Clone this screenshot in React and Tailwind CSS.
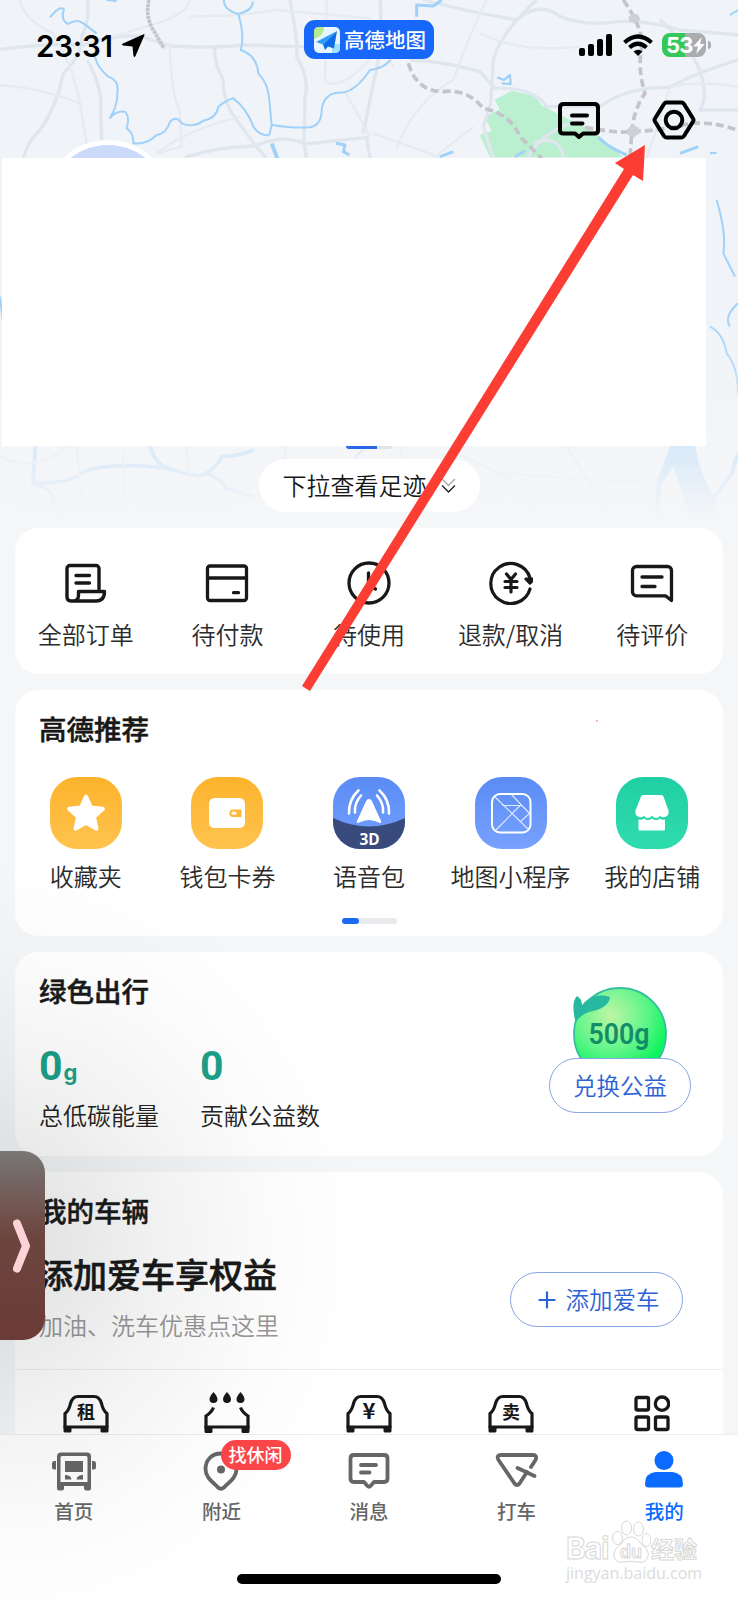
import { Plus } from 'lucide-react'

const ORDERS = [
  { label: '全部订单', icon: OrderIcon },
  { label: '待付款', icon: PayIcon },
  { label: '待使用', icon: ClockIcon },
  { label: '退款/取消', icon: RefundIcon },
  { label: '待评价', icon: ReviewIcon },
]

const RECOMMENDED = [
  { label: '收藏夹', color: 'bg-linear-to-b from-[#fcb32a] to-[#ffc34d]', icon: StarArt },
  { label: '钱包卡券', color: 'bg-linear-to-b from-[#fcb32a] to-[#ffc34d]', icon: WalletArt },
  { label: '语音包', color: 'bg-linear-to-b from-[#5a8cf5] to-[#74a0ff]', icon: VoiceArt },
  { label: '地图小程序', color: 'bg-linear-to-b from-[#5a8cf5] to-[#78a1ff]', icon: MiniAppArt },
  { label: '我的店铺', color: 'bg-linear-to-b from-[#1fcfa3] to-[#2fdcae]', icon: ShopArt },
]

const TABS = [
  { label: '首页', icon: BusIcon },
  { label: '附近', icon: PinIcon, badge: '找休闲' },
  { label: '消息', icon: MessageTabIcon },
  { label: '打车', icon: TaxiIcon },
  { label: '我的', icon: UserIcon, active: true },
]

function Stroke({ children, className = 'h-11 w-11', width = 3.2 }) {
  return (
    <svg
      viewBox="0 0 44 44"
      className={className}
      fill="none"
      stroke="currentColor"
      strokeWidth={width}
      strokeLinecap="round"
      strokeLinejoin="round"
    >
      {children}
    </svg>
  )
}

function OrderIcon() {
  return (
    <Stroke width={3.4}>
      <path d="M35 28V7.500a3 3 0 0 0-3-3H6a3 3 0 0 0-3 3V36q0 4 4 4h25q8.500 0 8.500-9.500H14.500V34q0 6-5 6" />
      <path d="M12 14.500h13.500M12 22h13.500" />
    </Stroke>
  )
}

function PayIcon() {
  return (
    <Stroke width={3.3}>
      <rect x="2.500" y="5" width="39" height="34.500" rx="2.500" />
      <path d="M2.500 17h39M28.500 31.700h5" />
    </Stroke>
  )
}

function ClockIcon() {
  return (
    <Stroke width={3.3}>
      <circle cx="22" cy="22" r="20" />
      <path d="M21.500 12v12l7 4" />
    </Stroke>
  )
}

function RefundIcon() {
  return (
    <Stroke width={3.2}>
      <path d="M41 17A20 20 0 1 0 41 28" />
      <path d="M37 18h8l-4.200 4z" fill="currentColor" />
      <path d="M17.500 13l4.500 5.500 4.500-5.500M16 20.500h12M16 26.500h12M22 19v12" />
    </Stroke>
  )
}

function ReviewIcon() {
  return (
    <Stroke width={3.3}>
      <path d="M6.500 5.500h31a4 4 0 0 1 4 4V39.500l-6-4.700H6.500a4 4 0 0 1-4-4V9.500a4 4 0 0 1 4-4z" />
      <path d="M12 16h20M12 25.500h13" />
    </Stroke>
  )
}

function StarArt() {
  return (
    <svg viewBox="0 0 72 72" className="h-full w-full">
      <path
        d="M36 19.500l4.900 11 12 1.300-9 8.100 2.600 11.900L36 45.700l-10.500 6.100 2.600-11.900-9-8.100 12-1.300z"
        fill="#fff"
        stroke="#fff"
        strokeWidth="4"
        strokeLinejoin="round"
      />
    </svg>
  )
}

function WalletArt() {
  return (
    <svg viewBox="0 0 72 72" className="h-full w-full">
      <rect x="18" y="21" width="36" height="30" rx="5.500" fill="#fff" />
      <path d="M50.500 32.500H42a3.700 3.700 0 0 0 0 7.400h8.500z" fill="#fdba39" />
      <ellipse cx="43" cy="36.200" rx="2.500" ry="1.600" fill="#fff" />
    </svg>
  )
}

function VoiceArt() {
  return (
    <svg viewBox="0 0 72 72" className="h-full w-full">
      <path d="M0 41q36 17 72 0v31H0z" fill="#394b7c" />
      <path d="M36 22q2 0 3 2.200l9 19.800q1 3-2 1.500-10-5-20 0-3 1.500-2-1.500l9-19.800q1-2.200 3-2.200z" fill="#fff" />
      <path
        d="M25.500 13.500q-10 9-9.500 23M28 18.500q-7 8-6 17M46.500 13.500q10 9 9.500 23M44 18.500q7 8 6 17"
        fill="none"
        stroke="#fff"
        strokeWidth="2.600"
        strokeLinecap="round"
      />
      <text x="36.500" y="68" textAnchor="middle" fontFamily="Noto Sans" fontWeight="700" fontSize="15.500" fill="#fff">3D</text>
    </svg>
  )
}

function MiniAppArt() {
  return (
    <svg viewBox="0 0 72 72" className="h-full w-full" fill="none" stroke="#fff">
      <rect x="17" y="17" width="38.500" height="38.500" rx="8" strokeWidth="2" />
      <path d="M20 20l33 32M21 53l24-24.500M36 17l19 20M27 28.500h20M45 45l10-9" strokeWidth="1.100" opacity=".8" />
    </svg>
  )
}

function ShopArt() {
  return (
    <svg viewBox="0 0 72 72" className="h-full w-full" fill="#fff">
      <path d="M25 19.500q.6-1.500 2-1.500h18.500q1.400 0 2 1.500l5 14q1 4-2.500 6-3.500 2-6-.8-3.500 4.600-8 0-4.500 4.600-8 0-2.500 2.800-6 .8-3.500-2-2.500-6z" />
      <path d="M22.500 42.500q3.500.8 5.500-1 4 3 8 0 4 3 8 0 2 1.800 5 1V52q0 1.500-1.500 1.500H24q-1.500 0-1.500-1.500z" />
    </svg>
  )
}

// front view of a car, shared by the service shortcuts
function CarIcon({ char }) {
  return (
    <svg viewBox="0 0 46 42" className="h-[42px] w-[46px]">
      <path
        d="M2 35V21.500q4-3 5.500-10Q9.500 4.500 15 4.500h16q5.500 0 7.500 7 1.500 7 5.500 10V35z"
        fill="none"
        stroke="#181818"
        strokeWidth="3.200"
        strokeLinejoin="round"
      />
      <path d="M.5 34h8v5q0 1.500-1.500 1.500H2q-1.500 0-1.500-1.500zM37.500 34h8v5q0 1.500-1.500 1.500h-5q-1.500 0-1.500-1.500z" fill="#181818" />
      <text x="23" y="26.500" textAnchor="middle" fontFamily="Noto Sans CJK SC" fontWeight="700" fontSize={char === '¥' ? 22 : 18} fill="#181818">
        {char}
      </text>
    </svg>
  )
}

function CarWashIcon() {
  return (
    <svg viewBox="0 0 46 42" className="h-[42px] w-[46px]" fill="#181818">
      <path d="M9.500 15.500Q7.500 20.500 2 24v11h42V24q-5.500-3.500-7.500-8.500" fill="none" stroke="#181818" strokeWidth="3.200" />
      <path d="M.5 34h8v5.500q0 1.500-1.500 1.500H2q-1.500 0-1.500-1.500zM37.500 34h8v5.500q0 1.500-1.500 1.500h-5q-1.500 0-1.500-1.500z" />
      <path d="M9.500 0q4 4.500 4 7a4 4 0 0 1-8 0q0-2.500 4-7zM23 0q4 4.500 4 7a4 4 0 0 1-8 0q0-2.500 4-7zM36.500 0q4 4.500 4 7a4 4 0 0 1-8 0q0-2.500 4-7z" />
    </svg>
  )
}

function GridIcon() {
  return (
    <svg viewBox="0 0 36 42" className="h-[42px] w-9" fill="none" stroke="#181818" strokeWidth="3.300">
      <rect x="2" y="5.500" width="12.500" height="12.500" rx="1.500" />
      <circle cx="28" cy="11.700" r="6.700" />
      <rect x="2" y="25" width="12.500" height="12.500" rx="1.500" />
      <rect x="21.500" y="25" width="12.500" height="12.500" rx="1.500" />
    </svg>
  )
}

function BusIcon() {
  return (
    <svg viewBox="0 0 44 40" className="h-10 w-11" fill="currentColor">
      <path d="M9 1.500h26a4 4 0 0 1 4 4V37.500q0 2-2 2h-3q-2 0-2-2V35H12v2.500q0 2-2 2H7q-2 0-2-2V5.500a4 4 0 0 1 4-4zM10 5q-1.500 0-1.500 1.500V31h27V6.500Q35.500 5 34 5z" fillRule="evenodd" />
      <rect x="13" y="10" width="18" height="11" />
      <path d="M13 24q6 0 6.500 4.500H13zM31 24q-6 0-6.500 4.500H31z" />
      <path d="M4 10v8.500H2q-2 0-2-2v-4q0-2.500 2-2.500zM40 10v8.500h2q2 0 2-2v-4q0-2.500-2-2.500z" />
    </svg>
  )
}

function PinIcon() {
  return (
    <svg viewBox="0 0 44 40" className="h-10 w-11" fill="none" stroke="currentColor" strokeWidth="3.800" strokeLinejoin="round">
      <path d="M22 2.500C12 2.500 6.500 10 6.500 18c0 9 8 13.500 12.500 18.500q3 2.500 6 0C29.500 31.500 37.500 27 37.500 18c0-8-5.500-15.500-15.500-15.500z" />
      <circle cx="22" cy="18.500" r="4" fill="currentColor" stroke="none" />
    </svg>
  )
}

function MessageTabIcon() {
  return (
    <svg viewBox="0 0 44 40" className="h-10 w-11" fill="none" stroke="currentColor" strokeWidth="3.800" strokeLinecap="round" strokeLinejoin="round">
      <path d="M7 4h30q3.500 0 3.500 3.500v20q0 3.500-3.500 3.500H27l-3.500 4q-1.500 1.500-3 0L17 31H7q-3.500 0-3.500-3.500v-20Q3.500 4 7 4z" />
      <path d="M14 14h15M14 21.500h8.500" />
    </svg>
  )
}

function TaxiIcon() {
  return (
    <svg viewBox="0 0 44 40" className="h-10 w-11" fill="none" stroke="currentColor" strokeWidth="3.800" strokeLinecap="round" strokeLinejoin="round">
      <path d="M36 16l4.500-7Q42.500 4 38 4H6Q1 4 3.500 9l16 23.500q2.500 3 5 0L32 21" />
      <path d="M22.500 17l17 8" />
    </svg>
  )
}

function UserIcon() {
  return (
    <svg viewBox="0 0 44 40" className="h-10 w-11" fill="currentColor">
      <circle cx="22" cy="9.500" r="9.500" />
      <path d="M3 33q0-11 10.500-12h17Q41 22 41 33q0 3.500-3.500 3.500h-31Q3 36.500 3 33z" />
    </svg>
  )
}

function MapBackground() {
  return (
    <svg viewBox="0 0 2214 1590" className="absolute top-0 left-0 h-[530px] w-[738px]" fill="none" strokeLinejoin="round">
      <defs>
        <linearGradient id="fade" x1="0" y1="0" x2="0" y2="1">
          <stop offset="0" stopColor="#f5f6f8" stopOpacity="0" />
          <stop offset="0.600" stopColor="#f5f6f8" stopOpacity="0.620" />
          <stop offset="0.950" stopColor="#f5f6f8" />
        </linearGradient>
      </defs>
      <rect width="2214" height="1590" fill="#f0f4f8" />
      <path
        d="M1484 300L1534 272L1604 287L1624 315L1680 345L1784 395L1870 472H1470L1439 405L1474 392L1455 350L1499 328Z"
        fill="#baf0d0"
      />
      <g stroke="#dfe6ee" strokeWidth="10">
        <path d="M262 0Q270 60 245 110Q250 160 190 220Q170 320 120 390Q80 430 70 475" />
        <path d="M0 148Q120 130 250 135Q330 105 420 108L510 138Q640 145 740 135L890 140L1110 138" />
        <path d="M262 180Q310 270 302 330L305 420" />
        <path d="M645 135Q640 190 670 240Q670 310 710 360L765 435L800 475" />
        <path d="M870 0Q895 130 890 170Q930 240 915 290L912 430L920 475" />
        <path d="M555 472Q650 440 765 438Q850 400 915 432L1100 412L1110 475" />
        <path d="M1270 0Q1380 30 1550 60Q1620 0 1680 50Q1760 80 1850 65Q1940 60 2040 90L2214 105" />
        <path d="M1610 0Q1500 100 1480 180L1472 310L1450 380L1480 475" />
        <path d="M1230 180Q1340 185 1440 215L1484 265Q1600 260 1640 320L1800 320Q1880 260 2010 262Q2080 220 2214 180" />
        <path d="M1980 60Q2050 120 2090 190Q2130 280 2100 330L2214 330" />
        <path d="M1140 0Q1150 140 1120 250L1090 400" />
        <path d="M1580 475Q1640 380 1740 365M1600 430Q1680 400 1690 475" />
      </g>
      <g stroke="#e6ebf2" strokeWidth="7">
        <path d="M60 0Q70 60 160 100Q220 200 240 310L260 430" />
        <path d="M0 255Q130 265 240 310" />
        <path d="M510 138Q510 260 540 340L545 440L470 460Q560 390 720 350" />
        <path d="M570 0Q560 50 420 85L340 110M570 50L720 45L830 30L1110 55L1180 200" />
        <path d="M980 0L975 240Q1010 280 1110 180M1035 275L1110 410" />
        <path d="M1460 0Q1410 100 1360 240Q1250 300 1190 440M1440 100Q1560 160 1740 140M1300 475L1420 380" />
        <path d="M1120 400L1330 475M2214 260Q2080 240 2010 262L1940 475" />
      </g>
      <g stroke="#c4c4ca" strokeWidth="11" strokeDasharray="24 12">
        <path d="M447 0Q435 50 460 90L492 145" strokeDasharray="10 2" />
        <path d="M1225 190Q1250 275 1330 275Q1400 265 1450 325Q1530 340 1560 410L1625 475" />
        <path d="M1870 0Q1920 70 1928 130Q1910 200 1935 280Q1900 330 1895 400L1890 475" />
        <path d="M1755 382Q1850 400 1895 395Q2000 390 2070 370Q2150 365 2214 392" />
      </g>
      <g fill="#cfcfd6">
        <path d="M1885 50l14-10 16 4 6 14-14 12-20-6zM1882 388l14-14 18 8 6 16-18 14-20-8z" />
      </g>
      <g stroke="#a0d1f9" strokeWidth="6">
        <path d="M150 52Q180 15 192 28Q180 60 205 72Q230 55 250 70L290 100" />
        <path d="M320 0L350 3" />
        <path d="M285 170Q290 200 325 230Q358 240 352 280Q352 320 330 354Q350 330 375 335Q390 350 380 385Q402 400 400 430Q440 435 470 405Q500 400 510 365Q530 345 545 370Q580 385 610 362Q650 355 655 320Q680 300 700 295Q740 325 760 380Q780 410 808 405" />
        <path d="M672 0Q670 30 715 42Q735 110 722 150Q770 165 775 220Q805 250 808 300L815 375L808 405M715 42Q760 30 758 5" />
        <path d="M815 375Q880 385 930 382Q965 375 965 330Q970 285 1010 278Q1060 285 1110 210Q1150 205 1172 180" />
        <path d="M815 430L832 475" strokeWidth="12" />
        <path d="M1008 430L1035 435L1030 455L1048 465M1250 50V15L1300 18L1325 0" strokeWidth="9" />
        <path d="M1492 232L1512 240L1530 225L1532 252L1505 250" strokeWidth="7" />
        <path d="M1795 412Q1820 440 1880 465M2040 460L2095 440M1320 470L1360 455M1545 470L1575 452" strokeWidth="9" />
        <path d="M2190 45L2214 30M2130 460L2150 458" />
        <path d="M2150 600Q2180 700 2170 760L2205 830M2130 980Q2170 1000 2180 1060Q2214 1100 2214 1180M2214 910Q2170 950 2190 980" />
        <path d="M0 890L8 960" />
        <path d="M106 1340L99 1450Q162 1470 160 1500L184 1570M99 1450Q220 1450 250 1415Q340 1385 494 1405L593 1428Q640 1420 665 1370Q710 1370 762 1350M450 1340Q470 1400 510 1405M620 1420Q670 1440 678 1465L762 1492" strokeWidth="11" />
        <path d="M1090 1350Q1060 1370 1065 1385" />
      </g>
      <g stroke="#dfe6ee" strokeWidth="7">
        <path d="M0 1370Q100 1420 200 1340M230 1340L250 1570M370 1350V1560M560 1340L580 1590M0 1540L400 1510L760 1540M860 1340L800 1560M1480 1420Q1650 1480 1560 1590M1700 1340L1860 1590M1350 1350L1500 1420L1960 1450M1200 1340L1210 1380" />
      </g>
      <path d="M2010 1338H2085Q2100 1430 2150 1500V1590H2080Q2050 1480 2020 1400L1985 1450L1970 1590H1958L1972 1440Z" fill="#a0d1f9" />
      <path d="M2214 1360L2195 1420L2145 1490" stroke="#a0d1f9" strokeWidth="12" />
      <rect y="900" width="2214" height="690" fill="url(#fade)" />
      <circle cx="324" cy="615" r="195" fill="#fff" />
      <circle cx="324" cy="615" r="180" fill="#cbd9fb" />
    </svg>
  )
}

function StatusBar() {
  return (
    <div className="flex h-[78px] items-start pr-[27px] pl-9">
      <div className="flex w-[268px] shrink-0 items-center gap-[9px] pt-7">
        <span className="font-[Inter] text-[29.500px] leading-9 font-semibold tracking-[-0.2px] text-black">23:31</span>
        <svg viewBox="0 0 24 24" className="h-6 w-6">
          <path d="M22.500 1L13.500 22q-1 2-2 0l-1-9.500L1 11.500q-2-1 0-2L21 .5q2-.6 1.500.5z" />
        </svg>
      </div>
      <div className="mt-5 flex h-[39px] w-[130px] shrink-0 items-center gap-[4px] rounded-[11px] bg-[#1867fb] pl-[10px]">
        <svg viewBox="0 0 26 26" className="h-[26px] w-[26px] shrink-0">
          <rect width="26" height="26" rx="5" fill="#e9f6ff" />
          <path d="M0 12V5q0-5 5-5h5q0 9-10 12z" fill="#b5ea8f" />
          <path d="M18 26v-9h8v4q0 5-5 5z" fill="#9ee3fb" />
          <path d="M23 4L2 15l7 2.500z" fill="#2f9dfb" />
          <path d="M23 4L9 17.500 11 23l3-3.500 6 2z" fill="#0d6ce8" />
        </svg>
        <span className="text-[20.500px] leading-none font-medium whitespace-nowrap text-white">高德地图</span>
      </div>
      <div className="flex flex-1 items-center justify-end pt-[33px]">
        <svg viewBox="0 0 34 22" className="mr-[10px] h-[22px] w-[34px]">
          <rect x="0" y="14" width="6" height="8" rx="2" />
          <rect x="9" y="10" width="6" height="12" rx="2" />
          <rect x="18" y="5" width="6" height="17" rx="2" />
          <rect x="27" y="0" width="6" height="22" rx="2" />
        </svg>
        <svg viewBox="0 0 30 22" className="mr-[9px] h-[22px] w-[30px]" fill="none" stroke="#000" strokeWidth="4.200">
          <path d="M1.500 8.500q13.500-12 27 0" />
          <path d="M6.500 13.500q8.500-7.500 17 0" />
          <path d="M10.500 17.500q4.500-3.500 9 0L15 22z" fill="#000" stroke="none" />
        </svg>
        <div className="flex h-6 w-11 items-center overflow-hidden rounded-lg bg-linear-to-r from-[#34c759] from-52% to-[#a9acb0] to-52% pl-1">
          <span className="font-[Inter] text-[22px] leading-6 font-bold tracking-[-0.8px] text-white">53</span>
          <svg viewBox="0 0 12 18" className="h-[17px] w-3" fill="#fff">
            <path d="M9 0L0 10h5L3 18l9-10.500H7z" />
          </svg>
        </div>
        <div className="ml-0.5 h-2 w-[3px] rounded-r-full bg-[#a9acb0]" />
      </div>
    </div>
  )
}

function Toolbar() {
  return (
    <div className="flex h-20 items-start justify-end gap-[51px] pt-[22px] pr-[42px]">
      <svg viewBox="0 0 44 40" className="h-10 w-11" fill="none" stroke="#000" strokeWidth="4" strokeLinecap="round" strokeLinejoin="round">
        <path d="M6.500 4h31q3.500 0 3.500 3.500v23q0 3-3.500 3H26L22 37l-4-3.500H6.500Q3 33.500 3 30.500v-23Q3 4 6.500 4z" />
        <path d="M15 15.500h15M15 23.500h10.500" />
      </svg>
      <svg viewBox="0 0 44 40" className="h-10 w-11" fill="none" stroke="#000" strokeWidth="4" strokeLinejoin="round">
        <path d="M14.500 2.500h15q1.500 0 2.500 1.500l9 14.500q1 1.500 0 3l-9 14.500q-1 1.500-2.500 1.500h-15q-1.500 0-2.500-1.500L3 21.500q-1-1.500 0-3L12 4q1-1.500 2.500-1.500z" />
        <circle cx="22" cy="20" r="8.300" />
      </svg>
    </div>
  )
}

function CardTitle({ children }) {
  return (
    <h2 className="pl-6 text-[27.500px] leading-10 font-medium whitespace-nowrap text-[#181818] [-webkit-text-stroke:0.500px_#181818]">
      {children}
    </h2>
  )
}

function Card({ className = '', children }) {
  return <section className={`ml-[15px] w-[708px] shrink-0 rounded-[24px] bg-white ${className}`}>{children}</section>
}

function SideHandle() {
  return (
    <div className="absolute top-[1151px] left-0 flex h-[189px] w-[45px] items-center rounded-r-[22px] bg-linear-to-b from-[#777776] via-[#6d453f] via-45% to-[#6b3b37] pl-[13px]">
      <svg viewBox="0 0 18 54" className="h-[54px] w-[18px]" fill="none" stroke="#fdd3d5" strokeWidth="8" strokeLinecap="round" strokeLinejoin="round">
        <path d="M4 4.500l9 22.500-9 22.500" />
      </svg>
    </div>
  )
}

function Watermark() {
  return (
    <div className="absolute top-[1518px] left-[566px] flex w-[136px] flex-col opacity-90">
      <div className="flex h-[46px] items-end">
        <span className="w-[45px] font-[Inter] text-[30px] leading-8 font-bold tracking-[-1px] text-white [-webkit-text-stroke:1px_#d4d4d4]">Bai</span>
        <svg viewBox="0 0 40 44" className="h-11 w-10 shrink-0" fill="#fff" stroke="#d4d4d4" strokeWidth="1">
          <ellipse cx="6.500" cy="18" rx="5" ry="6.500" />
          <ellipse cx="15.500" cy="8" rx="5" ry="7" />
          <ellipse cx="27.500" cy="9" rx="5" ry="7" />
          <ellipse cx="35.500" cy="20" rx="4.500" ry="6.500" />
          <path d="M20 17q6 0 10 7 9 6 7 13-3 7-10 5-7-1.500-14 0-8 1.500-10-5Q2 29 10 24q4-7 10-7z" />
          <text x="20" y="38" textAnchor="middle" fontFamily="Inter" fontSize="18" fontWeight="600">du</text>
        </svg>
        <span className="text-[23px] leading-8 font-bold whitespace-nowrap text-white [-webkit-text-stroke:1px_#d4d4d4]">经验</span>
      </div>
      <span className="-mt-px font-[Open_Sans] text-[16px] leading-5 whitespace-nowrap text-[#d8d8d8]">jingyan.baidu.com</span>
    </div>
  )
}

export default function App() {
  return (
    <div className="relative flex h-[1600px] w-[738px] flex-col overflow-hidden bg-[#f4f6f8] font-['Noto_Sans_CJK_SC',sans-serif] text-[#333]">
      <MapBackground />

      <header className="relative h-[528px] shrink-0">
        <StatusBar />
        <Toolbar />
        <div className="ml-0.5 h-72 w-[704px] bg-white" />
        <div className="mx-auto flex h-[3px] w-[46px] overflow-hidden rounded-b-sm bg-[#e0e3e8]">
          <div className="w-[31px] bg-[#2a6aea]" />
        </div>
        <div className="mx-auto mt-[10px] flex h-[53px] w-[221px] items-center gap-[14px] rounded-full bg-white pl-6">
          <span className="-mt-0.5 text-[24px] leading-none font-[350] whitespace-nowrap text-[#181818]">下拉查看足迹</span>
          <svg viewBox="0 0 14 14" className="h-[15px] w-[15px]" fill="none" strokeWidth="1.300">
            <path d="M1 1l6 6 6-6" stroke="#aaa" />
            <path d="M1 7l6 6 6-6" stroke="#222" />
          </svg>
        </div>
      </header>

      <main className="relative flex h-[906px] shrink-0 flex-col gap-4 overflow-hidden">
        <Card className="grid h-[146px] grid-cols-5 pt-[33px]">
          {ORDERS.map((item) => (
            <div key={item.label} className="flex flex-col items-center gap-[11px] text-[#181818]">
              <item.icon />
              <span className="text-[24px] leading-9 font-[350] whitespace-nowrap text-[#2b2b2b]">{item.label}</span>
            </div>
          ))}
        </Card>

        <Card className="h-[246px] pt-[18px]">
          <CardTitle>高德推荐</CardTitle>
          <div className="mt-[29px] grid grid-cols-5">
            {RECOMMENDED.map((item) => (
              <div key={item.label} className="flex flex-col items-center gap-[9px]">
                <div className={`h-[72px] w-[72px] overflow-hidden rounded-[27px] ${item.color}`}>
                  <item.icon />
                </div>
                <span className="text-[24px] leading-9 font-[350] whitespace-nowrap text-[#2b2b2b]">{item.label}</span>
              </div>
            ))}
          </div>
          <div className="mx-auto mt-6 flex h-1.5 w-[55px] rounded-full bg-[#e8eaed]">
            <div className="w-[17px] rounded-full bg-[#1f6af5]" />
          </div>
        </Card>

        <Card className="flex h-[204px] justify-between pt-[18px]">
          <div>
            <CardTitle>绿色出行</CardTitle>
            <div className="mt-9 flex pl-6">
              <div className="w-[161px]">
                <div className="flex h-[51px] items-baseline gap-px font-[Roboto] font-bold text-[#1c9f88]">
                  <span className="text-[41px] leading-10">0</span>
                  <span className="font-[Inter] text-[22px] leading-8">g</span>
                </div>
                <div className="text-[24px] leading-9 font-[350] whitespace-nowrap text-[#222]">总低碳能量</div>
              </div>
              <div>
                <div className="h-[51px] font-[Roboto] text-[41px] leading-10 font-bold text-[#1c9f88]">0</div>
                <div className="text-[24px] leading-9 font-[350] whitespace-nowrap text-[#222]">贡献公益数</div>
              </div>
            </div>
          </div>
          <div className="mr-[32px] flex w-[142px] flex-col items-center pt-[15px]">
            <svg viewBox="0 0 100 73" className="h-[73px] w-[100px] shrink-0">
              <defs>
                <radialGradient id="ball" cx="0.4" cy="0.3" r="0.65">
                  <stop offset="0" stopColor="#bff5a5" />
                  <stop offset="0.600" stopColor="#5ff58a" />
                  <stop offset="1" stopColor="#0cf45c" />
                </radialGradient>
              </defs>
              <circle cx="50" cy="49" r="46" fill="url(#ball)" stroke="#36bfa3" strokeWidth="1.800" />
              <path d="M5 35Q1 17 7 11q5 3 5 9 11-13 28-8-1 10-17 14Q12 28 6 37z" fill="#27b99f" />
              <text x="49" y="59" textAnchor="middle" fontFamily="Roboto" fontWeight="600" fontSize="30" textLength="61" lengthAdjust="spacingAndGlyphs" fill="#138c68">
                500g
              </text>
            </svg>
            <div className="flex h-[55px] w-[142px] shrink-0 items-center justify-center rounded-full border border-[#86a5e5] bg-white text-[23.500px] font-[350] whitespace-nowrap text-[#2c62d5]">
              兑换公益
            </div>
          </div>
        </Card>

        <Card className="h-[300px] pt-[18px]">
          <CardTitle>我的车辆</CardTitle>
          <div className="flex h-[140px] items-start justify-between border-b border-[#eceef0] pr-10 pl-6">
            <div className="pt-[19px]">
              <div className="text-[34px] leading-[50px] font-medium whitespace-nowrap text-[#181818] [-webkit-text-stroke:0.600px_#181818]">
                添加爱车享权益
              </div>
              <div className="mt-2 text-[24px] leading-9 font-[350] whitespace-nowrap text-[#979797]">加油、洗车优惠点这里</div>
            </div>
            <button className="mt-[42px] flex h-[55px] w-[173px] items-center justify-center gap-[6px] rounded-full border border-[#86a5e5] text-[23.500px] font-[350] whitespace-nowrap text-[#2c62d5]">
              <Plus className="h-[26px] w-[26px]" strokeWidth={2} />
              添加爱车
            </button>
          </div>
          <div className="grid grid-cols-5 justify-items-center pt-[22px]">
            <CarIcon char="租" />
            <CarWashIcon />
            <CarIcon char="¥" />
            <CarIcon char="卖" />
            <GridIcon />
          </div>
        </Card>
      </main>

      <nav className="relative h-[166px] shrink-0 border-t border-[#ebedef] bg-white">
        <div className="grid grid-cols-5 pt-4">
          {TABS.map((tab) => (
            <div
              key={tab.label}
              className={`relative flex flex-col items-center gap-[5px] ${tab.active ? 'text-[#0a6bfe]' : 'text-[#666]'}`}
            >
              <tab.icon />
              <span className="text-[19.500px] leading-[30px] font-medium">{tab.label}</span>
              {tab.badge && (
                <span className="absolute -top-[11px] left-[73px] flex h-[30px] w-[70px] items-center justify-center rounded-full bg-[#fc4549] pb-px text-[18px] font-medium whitespace-nowrap text-white">
                  {tab.badge}
                </span>
              )}
            </div>
          ))}
        </div>
        <div className="mx-auto mt-12 h-[10px] w-[264px] rounded-full bg-black" />
      </nav>

      {/* soft shade cast by the side handle */}
      <div className="pointer-events-none absolute top-[845px] left-0 h-[755px] w-[380px] bg-[radial-gradient(370px_390px_at_0_400px,rgba(20,25,30,0.14),rgba(20,25,30,0.055)_45%,rgba(20,25,30,0.015)_75%,transparent)]" />
      <SideHandle />
      <Watermark />

      <svg viewBox="0 0 738 1600" className="pointer-events-none absolute inset-0 h-full w-full" fill="#fc3d33">
        <path d="M302 686L624 169L615 163L645 145L643 181L633 175L310 691Z" />
        <circle cx="597" cy="721" r="1" opacity=".5" />
      </svg>
    </div>
  )
}
